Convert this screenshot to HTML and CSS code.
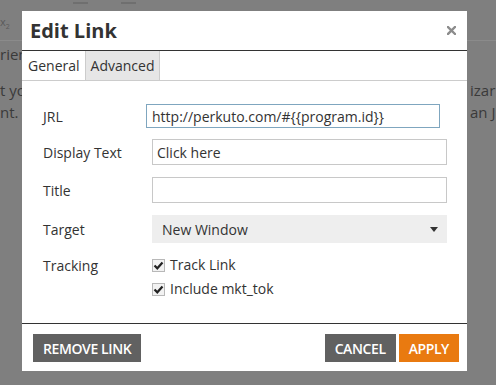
FILE: index.html
```html
<!DOCTYPE html>
<html lang="en">
<head>
  <meta charset="UTF-8" />
  <meta name="viewport" content="width=device-width, initial-scale=1.0"/>
  <title>Edit Link</title>
  <link rel="stylesheet" href="styles.css">
</head>
<body>

  <!-- Page behind the dialog, dimmed -->
  <div class="page">
    <div class="toolbar">
      <span class="tool-mark"></span>
      <span class="tool-mark second"></span>
      <span class="tool-sub">x<sub>2</sub></span>
    </div>
    <div class="page-text">
      <div class="line"><span class="left">rien</span><span></span><span class="right"></span></div>
      <div class="line gap"><span class="left">t yo</span><span></span><span class="right">izar</span></div>
      <div class="line"><span class="left">nt.</span><span></span><span class="right">an Ju</span></div>
    </div>
  </div>

  <div class="modal">
    <div class="modal-header">
      <h2>Edit Link</h2>
      <button class="close" title="Close">
        <svg width="9" height="9" viewBox="0 0 9 9">
          <path d="M1 1 L8 8 M8 1 L1 8" stroke="#8c8c8c" stroke-width="2.4" stroke-linecap="square" fill="none"/>
        </svg>
      </button>
    </div>

    <div class="tabs">
      <div class="tab active">General</div>
      <div class="tab">Advanced</div>
    </div>

    <div class="modal-body">
      <div class="form-row first">
        <label for="url">JRL</label>
        <input type="text" id="url" class="field field-url" value="http://perkuto.com/#{{program.id}}">
      </div>
      <div class="form-row">
        <label for="displayText">Display Text</label>
        <input type="text" id="displayText" class="field" value="Click here">
      </div>
      <div class="form-row">
        <label for="title">Title</label>
        <input type="text" id="title" class="field" value="">
      </div>
      <div class="form-row">
        <label>Target</label>
        <div class="select">
          <span>New Window</span>
          <svg class="caret" width="8" height="5" viewBox="0 0 8 5">
            <path d="M0 0 H8 L4 5 Z" fill="#333"/>
          </svg>
        </div>
      </div>
      <div class="form-row check-row">
        <label>Tracking</label>
        <div class="check">
          <span class="box">
            <svg width="11" height="11" viewBox="0 0 11 11">
              <path d="M1.5 5.5 L4.3 8.3 L9.5 2.5" stroke="#222" stroke-width="2.2" fill="none"/>
            </svg>
          </span>
          Track Link
        </div>
      </div>
      <div class="form-row check-row last">
        <label></label>
        <div class="check">
          <span class="box">
            <svg width="11" height="11" viewBox="0 0 11 11">
              <path d="M1.5 5.5 L4.3 8.3 L9.5 2.5" stroke="#222" stroke-width="2.2" fill="none"/>
            </svg>
          </span>
          Include mkt_tok
        </div>
      </div>
    </div>

    <div class="modal-footer">
      <button class="btn btn-gray">REMOVE LINK</button>
      <div class="footer-right">
        <button class="btn btn-gray">CANCEL</button>
        <button class="btn btn-orange">APPLY</button>
      </div>
    </div>
  </div>

</body>
</html>
```

FILE: styles.css
```css
/* Reset */
* {
  margin: 0;
  padding: 0;
  box-sizing: border-box;
  font-family: 'Open Sans', Arial, sans-serif;
}

body {
  width: 496px;
  height: 385px;
  overflow: hidden;
  background: #7f7f7f;
  color: #333;
}

/* Dimmed page behind the dialog */
.page {
  width: 100%;
  height: 100%;
}
.toolbar {
  height: 41px;
  border-bottom: 1px solid #8b8b8b;
  display: flex;
  flex-direction: column;
  padding-top: 2px;
}
.tool-mark {
  display: block;
  width: 15px;
  height: 2px;
  background: #6f6f6f;
  margin-left: 73px;
}
.tool-mark.second {
  margin-left: 121px;
  margin-top: -2px;
}
.tool-sub {
  font-size: 11px;
  color: #5a5a5a;
  margin-top: 12px;
  line-height: 12px;
}
.tool-sub sub {
  font-size: 7px;
}

.page-text {
  padding-top: 2px;
  font-size: 15px;
  color: #3a3a3a;
}
.line {
  display: grid;
  grid-template-columns: 22px 448px 26px;
  line-height: 22px;
  white-space: nowrap;
}
.line.gap {
  margin-top: 14px;
}
.line .left,
.line .right {
  overflow: hidden;
}

/* Dialog */
.modal {
  position: absolute;
  left: 22px;
  top: 11px;
  width: 445px;
  background: #fff;
}

.modal-header {
  height: 40px;
  border-bottom: 1px solid #333;
  display: flex;
  align-items: center;
  justify-content: space-between;
  padding: 0 8px 1px 8px;
}
.modal-header h2 {
  font-size: 20px;
  font-weight: 700;
  color: #333;
}
.close {
  border: none;
  background: none;
  width: 9px;
  height: 9px;
  margin-right: 3px;
  display: flex;
  cursor: pointer;
}

.tabs {
  display: flex;
  height: 30px;
  border-bottom: 1px solid #ccc;
}
.tab {
  font-size: 14px;
  line-height: 29px;
  padding: 0 5px 0 6px;
  border-right: 1px solid #ccc;
  color: #333;
}
.tab:not(.active) {
  background: #e6e6e6;
  padding: 0 5px;
}

.modal-body {
  padding: 23px 20px 24px 21px;
}
.form-row {
  display: flex;
  align-items: center;
  margin-bottom: 12px;
}
.form-row.first {
  margin-bottom: 11px;
}
.form-row.check-row {
  margin-bottom: 4px;
}
.form-row.last {
  margin-bottom: 0;
}
.form-row label {
  width: 103px;
  flex-shrink: 0;
  font-size: 14px;
  color: #333;
}

.field {
  width: 295px;
  height: 26px;
  margin-left: 6px;
  border: 1px solid #c8c8c8;
  padding: 0 4px;
  font-size: 14px;
  color: #333;
  background: #fff;
  outline: none;
}
.field-url {
  width: 294px;
  height: 24px;
  margin-left: 0;
  padding: 0 5px;
  border-color: #7fa6bf;
}

.select {
  width: 295px;
  height: 28px;
  margin-left: 6px;
  background: #eee;
  display: flex;
  align-items: center;
  justify-content: space-between;
  padding: 0 9px 0 10px;
  font-size: 14px;
  color: #333;
}

.check {
  display: flex;
  align-items: center;
  gap: 5px;
  margin-left: 6px;
  font-size: 14px;
  line-height: 20px;
  color: #333;
}
.check .box {
  width: 13px;
  height: 13px;
  border: 1px solid #b8b8b8;
  background: #f2f2f2;
  display: flex;
  align-items: center;
  justify-content: center;
}

.modal-footer {
  border-top: 1px solid #333;
  padding: 10px 8px 9px 11px;
  display: flex;
  justify-content: space-between;
}
.footer-right {
  display: flex;
  gap: 3px;
}
.btn {
  height: 28px;
  border: none;
  padding: 0 10px;
  font-size: 14px;
  font-weight: 600;
  letter-spacing: -0.4px;
  color: #fff;
  cursor: pointer;
}
.btn-gray {
  background: #616161;
}
.btn-orange {
  background: #e97a10;
}
```
